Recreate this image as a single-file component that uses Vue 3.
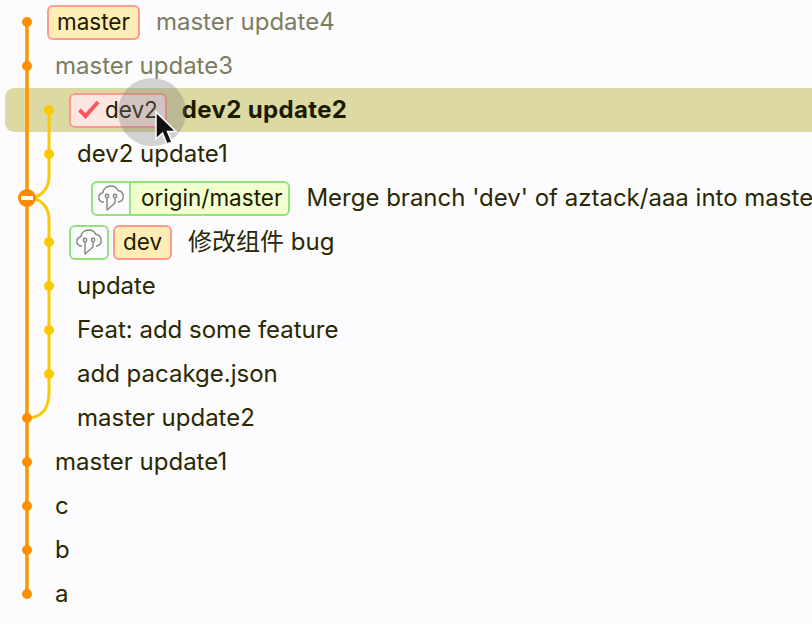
<script setup>
const rows = [
  { id: 1, text: 'master update4', level: 0, faded: true, tags: [{ name: 'master', kind: 'red' }] },
  { id: 2, text: 'master update3', level: 0, faded: true },
  { id: 3, text: 'dev2 update2', level: 1, active: true, tags: [{ name: 'dev2', kind: 'red', check: true }] },
  { id: 4, text: 'dev2 update1', level: 1 },
  { id: 5, text: "Merge branch 'dev' of aztack/aaa into master", level: 2, tags: [{ name: 'origin/master', kind: 'green', cloud: true, joined: true }] },
  { id: 6, text: '修改组件 bug', level: 1, cjk: true, tags: [{ kind: 'green', cloud: true }, { name: 'dev', kind: 'red' }] },
  { id: 7, text: 'update', level: 1 },
  { id: 8, text: 'Feat: add some feature', level: 1 },
  { id: 9, text: 'add pacakge.json', level: 1 },
  { id: 10, text: 'master update2', level: 1 },
  { id: 11, text: 'master update1', level: 0 },
  { id: 12, text: 'c', level: 0 },
  { id: 13, text: 'b', level: 0 },
  { id: 14, text: 'a', level: 0 },
]
const orange = [22, 66, 418, 462, 506, 550, 594]
const yellow = [110, 154, 242, 286, 330, 374]
</script>

<template>
  <div class="page">
    <div
      v-for="r in rows"
      :key="r.id"
      class="row"
      :class="['lvl' + r.level, { active: r.active, faded: r.faded, tagged: r.tags }]"
    >
      <div v-if="r.tags" class="tags">
        <span
          v-for="(t, i) in r.tags"
          :key="i"
          class="tag"
          :class="[t.kind, { joined: t.joined }]"
        >
          <span v-if="t.cloud" class="cloud">
            <svg width="26" height="26" viewBox="0 0 26 26" fill="none" stroke="#85857c" stroke-width="1.4" stroke-linecap="round" stroke-linejoin="round">
              <path d="M5.500 17C2.800 17 .8 15 .8 12.500C.8 10 2.500 8.200 4.800 7.800C5.500 3.600 8.800 1 12.800 1C16.200 1 18.800 2.800 20 5.500C23 6 25.200 8.500 25.200 11.500C25.200 14.500 23.200 16.700 20.500 17" />
              <circle cx="9" cy="11" r="1.700" />
              <circle cx="17" cy="11" r="1.700" />
              <path d="M9 12.700V25L17 18V12.700" />
            </svg>
          </span>
          <span v-if="t.name" class="label">
            <svg v-if="t.check" class="check" width="22" height="19" viewBox="0 0 22 19" fill="none">
              <path d="M1.500 10L7.500 16L20 2" stroke="#f6595b" stroke-width="4" />
            </svg>
            {{ t.name }}
          </span>
        </span>
      </div>
      <span class="msg" :class="{ cjk: r.cjk }">{{ r.text }}</span>
    </div>

    <svg class="graph" width="60" height="624" viewBox="0 0 60 624" fill="none">
      <path d="M49 110V176C49 188 42 198 28 198C42 198 49 208 49 220V392C49 408 42 418 27 418" stroke="#fcc800" stroke-width="3" />
      <path d="M27 22V594" stroke="#fd9500" stroke-width="3.500" />
      <circle v-for="y in yellow" :key="y" cx="49" :cy="y" r="5" fill="#fcc800" />
      <circle v-for="y in orange" :key="y" cx="27" :cy="y" r="5" fill="#fd9000" />
      <circle cx="27" cy="198" r="9" fill="#fd8a00" />
      <rect x="21" y="196" width="12" height="4" fill="#fff" />
    </svg>

    <div class="pointer">
      <svg class="arrow" width="30" height="40" viewBox="0 0 30 40">
        <path d="M3 1V28L9.500 22L14 33L19 31L14.500 20.500H23Z" fill="#111" stroke="#fff" stroke-width="1.500" />
      </svg>
    </div>
  </div>
</template>

<style scoped>
.page {
  position: relative;
  width: 812px;
  height: 624px;
  overflow: hidden;
  background: #fcfcff;
  font-family: Inter, "Noto Sans CJK SC", sans-serif;
  font-size: 24px;
  color: #2a2800;
}
.row {
  display: flex;
  align-items: center;
  height: 44px;
  white-space: nowrap;
}
.lvl0 { padding-left: 55px; }
.lvl1 { padding-left: 77px; }
.lvl2 { padding-left: 99px; }
.lvl0.tagged { padding-left: 47px; }
.lvl1.tagged { padding-left: 69px; }
.lvl2.tagged { padding-left: 91px; }
.faded { color: #7c7c5e; }
.row.active {
  margin-left: 5px;
  padding-left: 64px;
  border-radius: 9px 0 0 9px;
  background: #dcd9a2;
}
.msg {
  position: relative;
  top: -1px;
}
.msg.cjk { top: -3px; }
.tagged .msg { margin-left: 16px; }
.active.tagged .msg {
  margin-left: 15px;
  font-weight: 700;
  letter-spacing: 0.35px;
  color: #1c1a00;
}
.tags {
  display: flex;
  gap: 4px;
  font-size: 22.5px;
}
.tag {
  display: flex;
  align-items: stretch;
  height: 35px;
  box-sizing: border-box;
  border: 2px solid;
  border-radius: 6px;
  color: #201a00;
}
.red {
  border-color: #fc9a90;
  background: #ffedb6;
}
.active .red {
  background: #fde6e2;
}
.green {
  border-color: #93e27c;
  background: #fbfbff;
}
.label {
  display: flex;
  align-items: center;
  padding: 0 8px 2px;
}
.green .label {
  padding: 0 6px 2px 10px;
  background: #f2ffcf;
  border-radius: 0 5px 5px 0;
}
.active .label { padding: 0 7px 2px 7px; }
.check { margin-right: 5px; }
.cloud {
  display: flex;
  align-items: center;
  justify-content: center;
  width: 36px;
  box-sizing: border-box;
}
.joined .cloud {
  width: 38px;
  border-right: 2px solid #93e27c;
}
.graph {
  position: absolute;
  left: 0;
  top: 0;
}
.pointer {
  position: absolute;
  left: 118px;
  top: 78px;
  width: 68px;
  height: 68px;
  border-radius: 50%;
  background: rgba(120, 120, 120, 0.32);
}
.arrow {
  position: absolute;
  left: 35px;
  top: 33px;
}
</style>
